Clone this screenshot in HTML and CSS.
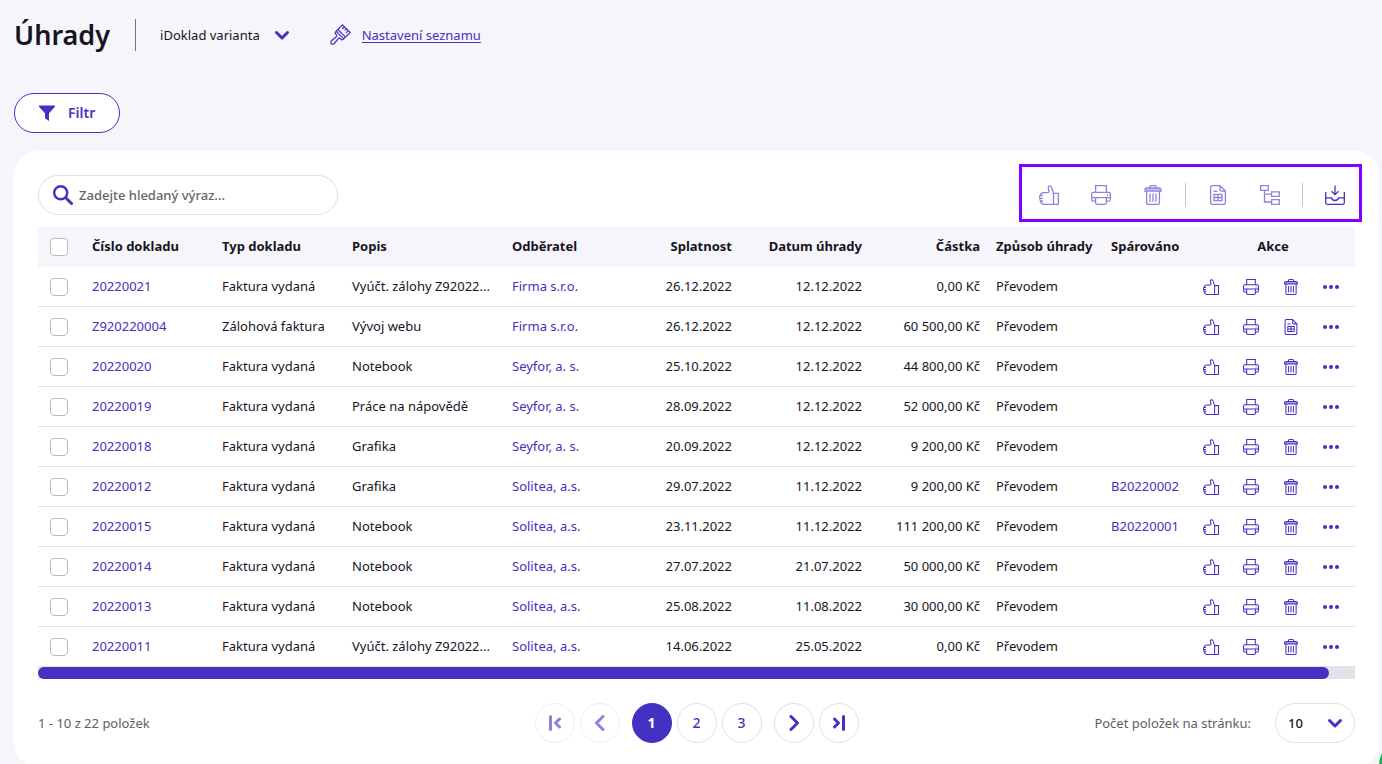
FILE: index.html
```
<!DOCTYPE html>
<html lang="cs">
<head>
<meta charset="utf-8">
<meta name="viewport" content="width=device-width, initial-scale=1">
<title>Úhrady</title>
<link rel="stylesheet" href="styles.css">
</head>
<body>
<svg class="sprite" aria-hidden="true">
  <symbol id="thumb" viewBox="0 0 20 20"><path d="M14.500 8.300 12.300 2C11.600.2 9 .5 9.300 2.800l.6 3.400c.2 1.200-1 1.300-2.400 1.400H4.500C2.500 7.800 1.600 8.600 1.200 10.600 0 11 .2 13 1.400 13.300.6 14.300.9 15.600 1.900 16c-.5 1.300.2 2.200 1.200 2.300.3.800 1 1.100 1.900 1.100h9.500M1.200 10.600h2.600M1.400 13.300h2.400M1.900 16h2.200M14.500 8.300h4.900v11.100h-4.900z"/></symbol>
  <symbol id="printer" viewBox="0 0 20 20"><path d="M4.600 7.300V.7h10.800v6.600M4.600 16.200H2.200a1.500 1.500 0 0 1-1.500-1.500V8.800a1.500 1.500 0 0 1 1.500-1.500h15.600a1.500 1.500 0 0 1 1.500 1.500v5.900a1.500 1.500 0 0 1-1.500 1.500h-2.400M.7 12.600h18.600M4.600 12.600h10.800v5.200a1.500 1.500 0 0 1-1.500 1.500H6.100a1.500 1.500 0 0 1-1.500-1.500zM16 10h1"/></symbol>
  <symbol id="trash" viewBox="0 0 20 20"><path d="M6.800 3V2A1.300 1.300 0 0 1 8.100.7h3.800A1.300 1.300 0 0 1 13.200 2v1M3.700 3h12.600a1.700 1.700 0 0 1 1.700 1.700v1.500H2V4.700A1.700 1.700 0 0 1 3.700 3zM3.600 6.200v11.500a1.600 1.600 0 0 0 1.600 1.600h9.600a1.600 1.600 0 0 0 1.600-1.600V6.200M7 8.600v8.200M10 8.600v8.200M13 8.600v8.200"/><path class="tint" d="M2 3.200h16v3H2z"/></symbol>
  <symbol id="sheet" viewBox="0 0 20 20"><path d="M12 .7H4.200a1.600 1.600 0 0 0-1.600 1.600v15.400a1.600 1.600 0 0 0 1.600 1.600h11.600a1.600 1.600 0 0 0 1.600-1.600V6.100zM12 .7v3.800a1.600 1.600 0 0 0 1.600 1.600h3.800M5.500 6.300h4M6 9.300h8v6.400H6zM6 12.500h8M10 9.300v6.400"/></symbol>
  <symbol id="tree" viewBox="0 0 20 20"><path d="M.7.7h7.600v4.600H.7zM11.600 6.800h7.700v4.600h-7.700zM11.600 14.700h7.700v4.600h-7.700zM4.500 5.300V17h7.100M4.500 9.100h7.100"/></symbol>
  <symbol id="inbox" viewBox="0 0 20 20"><path d="M.7 7v10.800a1.500 1.500 0 0 0 1.500 1.500h15.600a1.500 1.500 0 0 0 1.500-1.500V7M.7 12.800h5.600c.4 1.300 1.300 2.700 3.700 2.700s3.300-1.400 3.700-2.700h5.600M10 .5v9M6.500 6.300 10 9.700l3.500-3.400"/></symbol>
  <symbol id="dots" viewBox="0 0 16 16"><g class="solid"><circle cx="2" cy="8" r="2"/><circle cx="8" cy="8" r="2"/><circle cx="14" cy="8" r="2"/></g></symbol>
  <symbol id="brush" viewBox="0 0 20 20"><path transform="translate(-1 1) rotate(45 10 10) translate(1 1) scale(.9)" d="M4 8.500V-1.500h12V8.500zM4 5.800h12M7-1.500v3.500M10-1.500v2.500M13-1.500v3.500M4 8.500c0 2 1 2.600 2.200 2.600h1c1 0 1.300.7 1.200 1.600l-.6 6.500c-.3 3.900 4.700 3.900 4.400 0l-.6-6.500c-.1-.9.200-1.600 1.200-1.600h1c1.200 0 2.200-.6 2.200-2.600"/></symbol>
  <symbol id="funnel" viewBox="0 0 16 16"><path class="solid" d="M0 .5h16v1.200L10 8.200V16l-4-2.700V8.200L0 1.700z"/></symbol>
  <symbol id="search" viewBox="0 0 20 20"><g class="medium"><circle cx="7.700" cy="7.700" r="6.500"/></g><path class="bold" d="M13 13l5.500 5.500"/></symbol>
  <symbol id="down" viewBox="0 0 16 16"><path class="bold" d="M2.500 5.500 8 11l5.500-5.500"/></symbol>
  <symbol id="prev" viewBox="0 0 16 16"><path class="bold" d="M11 1.500 4.500 8l6.500 6.500"/></symbol>
  <symbol id="next" viewBox="0 0 16 16"><path class="bold" d="M5 1.500 11.500 8 5 14.500"/></symbol>
  <symbol id="first" viewBox="0 0 16 16"><path class="bold" d="M3.500 1.500v13M12.500 4 8.500 8l4 4"/></symbol>
  <symbol id="last" viewBox="0 0 16 16"><path class="bold" d="M12.500 1.500v13M3.500 4l4 4-4 4"/></symbol>
</svg>

<header class="header">
  <h1 class="title">Úhrady</h1>
  <button class="variant" type="button">iDoklad varianta <svg class="icon icon-s"><use href="#down"/></svg></button>
  <a class="settings" href="#"><svg class="icon icon-l brush"><use href="#brush"/></svg><span class="settings-label">Nastavení seznamu</span></a>
</header>

<button class="filter" type="button"><svg class="icon icon-s"><use href="#funnel"/></svg>Filtr</button>

<main class="card">
  <div class="topbar">
    <label class="search">
      <svg class="icon icon-l" aria-hidden="true"><use href="#search"/></svg>
      <input class="search-input" type="text" placeholder="Zadejte hledaný výraz..." aria-label="Hledat">
    </label>
    <div class="toolbar">
      <div class="tools">
        <button class="tool" disabled aria-label="Uhradit"><svg class="icon icon-l"><use href="#thumb"/></svg></button>
        <button class="tool" disabled aria-label="Tisk"><svg class="icon icon-l"><use href="#printer"/></svg></button>
        <button class="tool" disabled aria-label="Smazat"><svg class="icon icon-l"><use href="#trash"/></svg></button>
      </div>
      <div class="tools tools-split">
        <button class="tool" disabled aria-label="Doklad"><svg class="icon icon-l"><use href="#sheet"/></svg></button>
        <button class="tool" disabled aria-label="Struktura"><svg class="icon icon-l"><use href="#tree"/></svg></button>
      </div>
      <div class="tools tools-split">
        <button class="tool" aria-label="Export"><svg class="icon icon-l"><use href="#inbox"/></svg></button>
      </div>
    </div>
  </div>

  <table class="table">
    <colgroup><col class="c-check"><col class="c-std"><col class="c-std"><col class="c-desc"><col><col class="c-std"><col class="c-std"><col class="c-sum"><col class="c-way"><col class="c-pair"><col class="c-act"></colgroup>
    <thead>
      <tr><th class="check"><input class="box" type="checkbox" aria-label="Vybrat vše"></th><th>Číslo dokladu</th><th>Typ dokladu</th><th>Popis</th><th>Odběratel</th><th class="num">Splatnost</th><th class="num">Datum úhrady</th><th class="num">Částka</th><th>Způsob úhrady</th><th>Spárováno</th><th class="mid">Akce</th></tr>
    </thead>
    <tbody>
      <tr><td class="check"><input class="box" type="checkbox" aria-label="Vybrat 20220021"></td><td><a href="#">20220021</a></td><td>Faktura vydaná</td><td>Vyúčt. zálohy Z92022...</td><td><a href="#">Firma s.r.o.</a></td><td class="num">26.12.2022</td><td class="num">12.12.2022</td><td class="num">0,00 Kč</td><td>Převodem</td><td></td>
        <td class="act"><div class="actions"><button class="tool" aria-label="Uhradit"><svg class="icon icon-s"><use href="#thumb"/></svg></button><button class="tool" aria-label="Tisk"><svg class="icon icon-s"><use href="#printer"/></svg></button><button class="tool" aria-label="Smazat"><svg class="icon icon-s"><use href="#trash"/></svg></button><button class="tool" aria-label="Další"><svg class="icon icon-s"><use href="#dots"/></svg></button></div></td></tr>
      <tr><td class="check"><input class="box" type="checkbox" aria-label="Vybrat Z920220004"></td><td><a href="#">Z920220004</a></td><td>Zálohová faktura</td><td>Vývoj webu</td><td><a href="#">Firma s.r.o.</a></td><td class="num">26.12.2022</td><td class="num">12.12.2022</td><td class="num">60 500,00 Kč</td><td>Převodem</td><td></td>
        <td class="act"><div class="actions"><button class="tool" aria-label="Uhradit"><svg class="icon icon-s"><use href="#thumb"/></svg></button><button class="tool" aria-label="Tisk"><svg class="icon icon-s"><use href="#printer"/></svg></button><button class="tool" aria-label="Doklad"><svg class="icon icon-s"><use href="#sheet"/></svg></button><button class="tool" aria-label="Další"><svg class="icon icon-s"><use href="#dots"/></svg></button></div></td></tr>
      <tr><td class="check"><input class="box" type="checkbox" aria-label="Vybrat 20220020"></td><td><a href="#">20220020</a></td><td>Faktura vydaná</td><td>Notebook</td><td><a href="#">Seyfor, a. s.</a></td><td class="num">25.10.2022</td><td class="num">12.12.2022</td><td class="num">44 800,00 Kč</td><td>Převodem</td><td></td>
        <td class="act"><div class="actions"><button class="tool" aria-label="Uhradit"><svg class="icon icon-s"><use href="#thumb"/></svg></button><button class="tool" aria-label="Tisk"><svg class="icon icon-s"><use href="#printer"/></svg></button><button class="tool" aria-label="Smazat"><svg class="icon icon-s"><use href="#trash"/></svg></button><button class="tool" aria-label="Další"><svg class="icon icon-s"><use href="#dots"/></svg></button></div></td></tr>
      <tr><td class="check"><input class="box" type="checkbox" aria-label="Vybrat 20220019"></td><td><a href="#">20220019</a></td><td>Faktura vydaná</td><td>Práce na nápovědě</td><td><a href="#">Seyfor, a. s.</a></td><td class="num">28.09.2022</td><td class="num">12.12.2022</td><td class="num">52 000,00 Kč</td><td>Převodem</td><td></td>
        <td class="act"><div class="actions"><button class="tool" aria-label="Uhradit"><svg class="icon icon-s"><use href="#thumb"/></svg></button><button class="tool" aria-label="Tisk"><svg class="icon icon-s"><use href="#printer"/></svg></button><button class="tool" aria-label="Smazat"><svg class="icon icon-s"><use href="#trash"/></svg></button><button class="tool" aria-label="Další"><svg class="icon icon-s"><use href="#dots"/></svg></button></div></td></tr>
      <tr><td class="check"><input class="box" type="checkbox" aria-label="Vybrat 20220018"></td><td><a href="#">20220018</a></td><td>Faktura vydaná</td><td>Grafika</td><td><a href="#">Seyfor, a. s.</a></td><td class="num">20.09.2022</td><td class="num">12.12.2022</td><td class="num">9 200,00 Kč</td><td>Převodem</td><td></td>
        <td class="act"><div class="actions"><button class="tool" aria-label="Uhradit"><svg class="icon icon-s"><use href="#thumb"/></svg></button><button class="tool" aria-label="Tisk"><svg class="icon icon-s"><use href="#printer"/></svg></button><button class="tool" aria-label="Smazat"><svg class="icon icon-s"><use href="#trash"/></svg></button><button class="tool" aria-label="Další"><svg class="icon icon-s"><use href="#dots"/></svg></button></div></td></tr>
      <tr><td class="check"><input class="box" type="checkbox" aria-label="Vybrat 20220012"></td><td><a href="#">20220012</a></td><td>Faktura vydaná</td><td>Grafika</td><td><a href="#">Solitea, a.s.</a></td><td class="num">29.07.2022</td><td class="num">11.12.2022</td><td class="num">9 200,00 Kč</td><td>Převodem</td><td><a href="#">B20220002</a></td>
        <td class="act"><div class="actions"><button class="tool" aria-label="Uhradit"><svg class="icon icon-s"><use href="#thumb"/></svg></button><button class="tool" aria-label="Tisk"><svg class="icon icon-s"><use href="#printer"/></svg></button><button class="tool" aria-label="Smazat"><svg class="icon icon-s"><use href="#trash"/></svg></button><button class="tool" aria-label="Další"><svg class="icon icon-s"><use href="#dots"/></svg></button></div></td></tr>
      <tr><td class="check"><input class="box" type="checkbox" aria-label="Vybrat 20220015"></td><td><a href="#">20220015</a></td><td>Faktura vydaná</td><td>Notebook</td><td><a href="#">Solitea, a.s.</a></td><td class="num">23.11.2022</td><td class="num">11.12.2022</td><td class="num">111 200,00 Kč</td><td>Převodem</td><td><a href="#">B20220001</a></td>
        <td class="act"><div class="actions"><button class="tool" aria-label="Uhradit"><svg class="icon icon-s"><use href="#thumb"/></svg></button><button class="tool" aria-label="Tisk"><svg class="icon icon-s"><use href="#printer"/></svg></button><button class="tool" aria-label="Smazat"><svg class="icon icon-s"><use href="#trash"/></svg></button><button class="tool" aria-label="Další"><svg class="icon icon-s"><use href="#dots"/></svg></button></div></td></tr>
      <tr><td class="check"><input class="box" type="checkbox" aria-label="Vybrat 20220014"></td><td><a href="#">20220014</a></td><td>Faktura vydaná</td><td>Notebook</td><td><a href="#">Solitea, a.s.</a></td><td class="num">27.07.2022</td><td class="num">21.07.2022</td><td class="num">50 000,00 Kč</td><td>Převodem</td><td></td>
        <td class="act"><div class="actions"><button class="tool" aria-label="Uhradit"><svg class="icon icon-s"><use href="#thumb"/></svg></button><button class="tool" aria-label="Tisk"><svg class="icon icon-s"><use href="#printer"/></svg></button><button class="tool" aria-label="Smazat"><svg class="icon icon-s"><use href="#trash"/></svg></button><button class="tool" aria-label="Další"><svg class="icon icon-s"><use href="#dots"/></svg></button></div></td></tr>
      <tr><td class="check"><input class="box" type="checkbox" aria-label="Vybrat 20220013"></td><td><a href="#">20220013</a></td><td>Faktura vydaná</td><td>Notebook</td><td><a href="#">Solitea, a.s.</a></td><td class="num">25.08.2022</td><td class="num">11.08.2022</td><td class="num">30 000,00 Kč</td><td>Převodem</td><td></td>
        <td class="act"><div class="actions"><button class="tool" aria-label="Uhradit"><svg class="icon icon-s"><use href="#thumb"/></svg></button><button class="tool" aria-label="Tisk"><svg class="icon icon-s"><use href="#printer"/></svg></button><button class="tool" aria-label="Smazat"><svg class="icon icon-s"><use href="#trash"/></svg></button><button class="tool" aria-label="Další"><svg class="icon icon-s"><use href="#dots"/></svg></button></div></td></tr>
      <tr><td class="check"><input class="box" type="checkbox" aria-label="Vybrat 20220011"></td><td><a href="#">20220011</a></td><td>Faktura vydaná</td><td>Vyúčt. zálohy Z92022...</td><td><a href="#">Solitea, a.s.</a></td><td class="num">14.06.2022</td><td class="num">25.05.2022</td><td class="num">0,00 Kč</td><td>Převodem</td><td></td>
        <td class="act"><div class="actions"><button class="tool" aria-label="Uhradit"><svg class="icon icon-s"><use href="#thumb"/></svg></button><button class="tool" aria-label="Tisk"><svg class="icon icon-s"><use href="#printer"/></svg></button><button class="tool" aria-label="Smazat"><svg class="icon icon-s"><use href="#trash"/></svg></button><button class="tool" aria-label="Další"><svg class="icon icon-s"><use href="#dots"/></svg></button></div></td></tr>
    </tbody>
  </table>
  <div class="track"><div class="thumb-bar"></div></div>

  <footer class="footer">
    <span class="muted">1 - 10 z 22 položek</span>
    <nav class="pager" aria-label="Stránkování">
      <div class="pages"><button class="page" disabled aria-label="První"><svg class="icon icon-s"><use href="#first"/></svg></button><button class="page" disabled aria-label="Předchozí"><svg class="icon icon-s"><use href="#prev"/></svg></button></div>
      <div class="pages"><button class="page page-current">1</button><button class="page">2</button><button class="page">3</button></div>
      <div class="pages"><button class="page" aria-label="Další"><svg class="icon icon-s"><use href="#next"/></svg></button><button class="page" aria-label="Poslední"><svg class="icon icon-s"><use href="#last"/></svg></button></div>
    </nav>
    <div class="size">
      <label class="muted" for="size">Počet položek na stránku:</label>
      <div class="select-wrap">
        <select class="select" id="size"><option>10</option><option>20</option><option>50</option></select>
        <svg class="icon icon-s select-arrow"><use href="#down"/></svg>
      </div>
    </div>
  </footer>
</main>
<button class="chat" aria-label="Chat"></button>
</body>
</html>
```
FILE: styles.css
```
* { box-sizing: border-box; }
html { overflow: hidden; }
body {
  margin: 0;
  padding: 15px 3px 0 14px;
  background: #f6f5fb;
  color: #17141f;
  font: 400 13px/20px "Noto Sans", "Open Sans", sans-serif;
}
button, input, select { font: inherit; color: inherit; margin: 0; }
button { border: 0; padding: 0; background: none; cursor: pointer; }
a { color: #4431c4; text-decoration: none; }

.sprite { display: none; }
symbol { overflow: visible; }
.icon {
  display: block;
  flex: none;
  color: #4431c4;
  fill: none;
  stroke: currentColor;
  stroke-width: 1.3;
}
.icon-s { width: 16px; height: 16px; }
.icon-l { width: 20px; height: 20px; }
.brush { overflow: visible; }
.bold { stroke-width: 3; stroke-linecap: round; stroke-linejoin: round; }
.medium { stroke-width: 2.4; }
.solid { fill: currentColor; stroke: none; }
.tint { fill: currentColor; stroke: none; opacity: 0.5; }

.header { display: flex; align-items: center; height: 40px; margin-bottom: 38px; }
.title {
  margin: 0 25px 0 0;
  font-size: 27px;
  line-height: 32px;
  font-weight: 600;
}
.variant {
  display: flex;
  align-items: center;
  gap: 14px;
  height: 32px;
  padding-left: 24px;
  border-left: 1px solid #77747f;
}
.settings { display: flex; align-items: center; gap: 12px; margin-left: 40px; }
.settings-label { text-decoration: underline; text-underline-offset: 2px; }

.filter {
  display: flex;
  align-items: center;
  gap: 13px;
  height: 40px;
  margin-bottom: 18px;
  padding: 0 24px;
  border: 1px solid #4431c4;
  border-radius: 20px;
  background: #fff;
  color: #4431c4;
  font-size: 14px;
  font-weight: 600;
}

.card { padding: 24px; border-radius: 24px; background: #fff; }
.topbar { display: flex; justify-content: space-between; height: 40px; margin-bottom: 12px; }
.search {
  display: flex;
  align-items: center;
  gap: 6px;
  width: 300px;
  padding: 0 14px;
  border: 1px solid #e2e2e4;
  border-radius: 20px;
}
.search-input { flex: 1; min-width: 0; padding: 0; border: 0; outline: 0; background: none; font-weight: 500; }
.search-input::placeholder { color: #66646b; opacity: 1; }
.toolbar {
  display: flex;
  gap: 22px;
  height: 58px;
  margin: -11px -7px -7px 0;
  padding: 18px 14px 14px 17px;
  border: 3px solid #7f00ff;
}
.tools { display: flex; align-items: center; gap: 32px; }
.tools-split::before {
  content: "";
  width: 1px;
  height: 24px;
  margin-right: -10px;
  background: #c9c6d4;
}
.tool:disabled, .page:disabled .icon { opacity: 0.6; }

.table { width: 100%; table-layout: fixed; border-collapse: separate; border-spacing: 0; }
.c-check { width: 46px; }
.c-std { width: 130px; }
.c-desc { width: 160px; }
.c-sum { width: 118px; }
.c-way { width: 115px; }
.c-pair { width: 88px; }
.c-act { width: 164px; }
.table th, .table td {
  height: 40px;
  padding: 0 8px 2px;
  text-align: left;
  white-space: nowrap;
  border-bottom: 1px solid #e2e2e4;
}
.table th { background: #f6f5fb; border-color: #f6f5fb; font-weight: 700; }
.table .num { text-align: right; }
.table .mid { text-align: center; }
.table .check, .table .act { padding: 0 12px; }
.box {
  display: block;
  appearance: none;
  width: 18px;
  height: 18px;
  border: 1px solid #bdbcc1;
  border-radius: 4px;
  background: #fff;
}
.actions { display: flex; gap: 24px; }

.track { height: 12px; background: #e0e3e9; }
.thumb-bar { width: 98%; height: 12px; border-radius: 6px; background: #4431c4; }

.footer {
  display: grid;
  grid-template-columns: 1fr auto 1fr;
  align-items: center;
  margin-top: 24px;
}
.muted { color: #5f5d64; }
.pager { display: flex; gap: 12px; }
.pages { display: flex; gap: 5px; }
.page {
  display: grid;
  place-items: center;
  width: 40px;
  height: 40px;
  border: 1px solid #e2e2e4;
  border-radius: 50%;
  color: #4431c4;
  font-size: 14px;
  font-weight: 500;
}
.page:disabled { border-color: #eeeef0; }
.page-current { border-color: #4431c4; background: #4431c4; color: #fff; font-weight: 700; }
.size { display: flex; align-items: center; justify-content: flex-end; gap: 24px; }
.select-wrap { position: relative; }
.select {
  display: block;
  appearance: none;
  width: 80px;
  height: 40px;
  padding: 0 12px;
  border: 1px solid #e2e2e4;
  border-radius: 20px;
  background: #fff;
  font-weight: 500;
}
.select-arrow { position: absolute; right: 12px; top: 12px; pointer-events: none; }

.chat {
  position: fixed;
  right: -57px;
  bottom: -32px;
  width: 60px;
  height: 60px;
  border-radius: 50%;
  background: #0fb04c;
}
```
